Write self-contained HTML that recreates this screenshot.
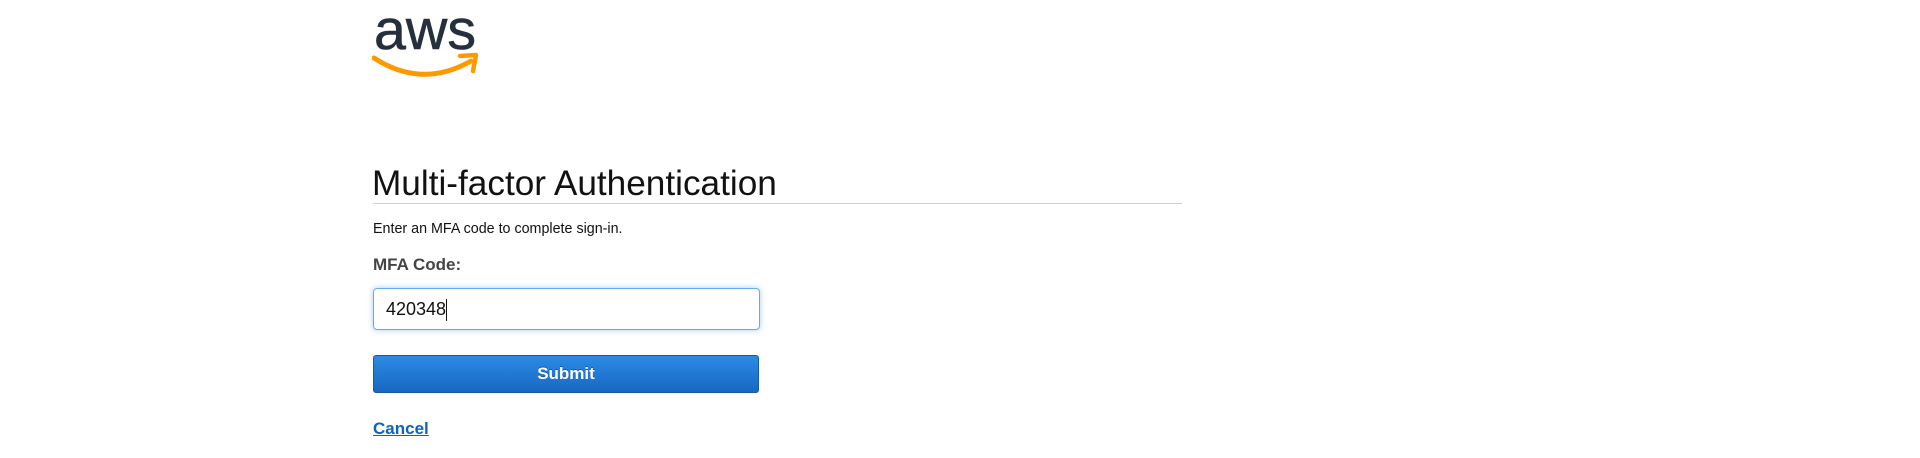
<!DOCTYPE html>
<html><head><meta charset="utf-8"><style>
body{margin:0;background:#fff;width:1920px;height:458px;overflow:hidden;font-family:"Liberation Sans",Arial,sans-serif;position:relative}
.a{position:absolute}
</style></head><body>
<svg class="a" style="left:372px;top:10px" width="108" height="72" viewBox="0 0 108 72">
<text x="2" y="39" font-family="Liberation Sans,Arial,sans-serif" font-size="57" fill="#252f3e" stroke="#252f3e" stroke-width="0.6" textLength="102" lengthAdjust="spacingAndGlyphs">aws</text>
<path d="M2 48 Q50 79 99 51" fill="none" stroke="#ff9900" stroke-width="5" stroke-linecap="round"/>
<path d="M88 46 L104 45 L101 61" fill="none" stroke="#ff9900" stroke-width="4.5" stroke-linejoin="round" stroke-linecap="round"/>
</svg>
<div class="a" style="left:372px;top:164px;font-size:35.2px;color:#111;white-space:nowrap">Multi-factor Authentication</div>
<div class="a" style="left:373px;top:203px;width:809px;height:1px;background:#d0d0d0"></div>
<div class="a" style="left:373px;top:221px;font-size:14.3px;color:#111">Enter an MFA code to complete sign-in.</div>
<div class="a" style="left:373px;top:255px;font-size:17px;font-weight:bold;color:#444">MFA Code:</div>
<div class="a" style="left:373px;top:288px;height:40px;border:1px solid #66a9f0;border-radius:4px;box-shadow:0 0 6px rgba(60,140,230,.45);font-size:18px;color:#111;line-height:40px;padding-left:12px;width:373px">420348<span style="display:inline-block;width:1px;height:22px;background:#111;vertical-align:middle"></span></div>
<div class="a" style="left:373px;top:355px;width:384px;height:36px;border:1px solid #1a5a9a;border-radius:3px;background:linear-gradient(#2d8ae5,#1668c2);color:#fff;font-weight:bold;font-size:17px;text-align:center;line-height:36px;text-shadow:0 -1px 0 rgba(0,0,0,.3)">Submit</div>
<div class="a" style="left:373px;top:419px;font-size:17px;font-weight:bold;color:#0f63b8;text-decoration:underline">Cancel</div>
</body></html>
